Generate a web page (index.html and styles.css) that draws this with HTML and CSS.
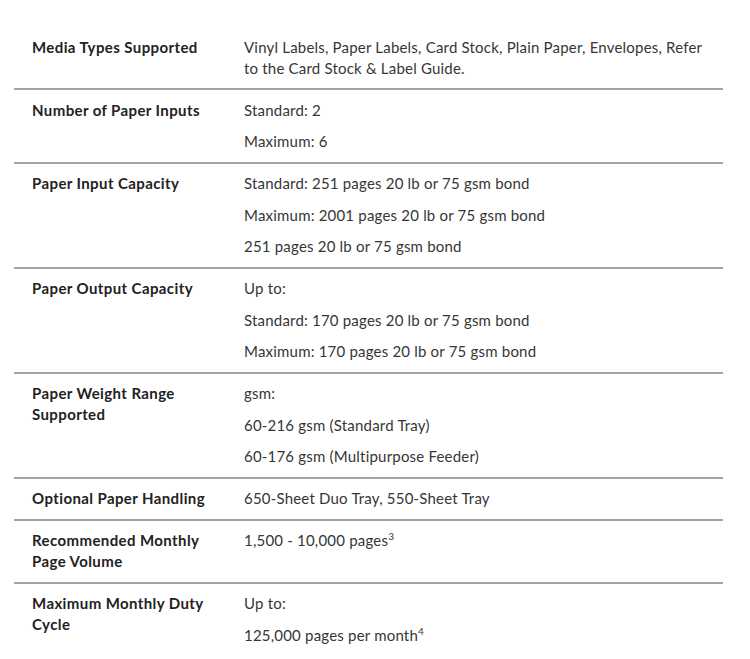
FILE: index.html
```html
<!DOCTYPE html>
<html lang="en">
<head>
<meta charset="utf-8">
<title>Paper Handling Specifications</title>
<link rel="stylesheet" href="styles.css">
</head>
<body>
<div class="specs">
  <div class="row">
    <div class="label">Media Types Supported</div>
    <div class="value"><p>Vinyl Labels, Paper Labels, Card Stock, Plain Paper, Envelopes, Refer to the Card Stock &amp; Label Guide.</p></div>
  </div>
  <div class="row">
    <div class="label">Number of Paper Inputs</div>
    <div class="value"><p>Standard: 2</p><p>Maximum: 6</p></div>
  </div>
  <div class="row">
    <div class="label">Paper Input Capacity</div>
    <div class="value"><p>Standard: 251 pages 20 lb or 75 gsm bond</p><p>Maximum: 2001 pages 20 lb or 75 gsm bond</p><p>251 pages 20 lb or 75 gsm bond</p></div>
  </div>
  <div class="row">
    <div class="label">Paper Output Capacity</div>
    <div class="value"><p>Up to:</p><p>Standard: 170 pages 20 lb or 75 gsm bond</p><p>Maximum: 170 pages 20 lb or 75 gsm bond</p></div>
  </div>
  <div class="row">
    <div class="label">Paper Weight Range Supported</div>
    <div class="value"><p>gsm:</p><p>60-216 gsm (Standard Tray)</p><p>60-176 gsm (Multipurpose Feeder)</p></div>
  </div>
  <div class="row">
    <div class="label">Optional Paper Handling</div>
    <div class="value"><p>650-Sheet Duo Tray, 550-Sheet Tray</p></div>
  </div>
  <div class="row">
    <div class="label">Recommended Monthly Page Volume</div>
    <div class="value"><p>1,500 - 10,000 pages<sup>3</sup></p></div>
  </div>
  <div class="row last">
    <div class="label">Maximum Monthly Duty Cycle</div>
    <div class="value"><p>Up to:</p><p>125,000 pages per month<sup>4</sup></p></div>
  </div>
</div>
</body>
</html>
```

FILE: styles.css
```css
html, body {
  margin: 0;
  padding: 0;
  background: #ffffff;
}

body {
  font-family: "Lato", "Liberation Sans", sans-serif;
  font-size: 15px;
  line-height: 21px;
  color: #363636;
}

.specs {
  width: 709px;
  margin: 27px 0 0 14px;
}

.row {
  display: grid;
  grid-template-columns: 212px 1fr;
  padding: 9.5px 14px 9.5px 18px;
  border-bottom: 2px solid #a3a3a3;
}

.row.last {
  border-bottom: none;
}

.label {
  font-weight: 700;
  color: #222222;
  letter-spacing: 0.4px;
  padding-right: 20px;
}

.value {
  display: flex;
  flex-direction: column;
  gap: 10.5px;
  letter-spacing: 0.2px;
}

.value p {
  margin: 0;
}

.value sup {
  font-size: 10px;
  line-height: 0;
  vertical-align: 6px;
}
```
